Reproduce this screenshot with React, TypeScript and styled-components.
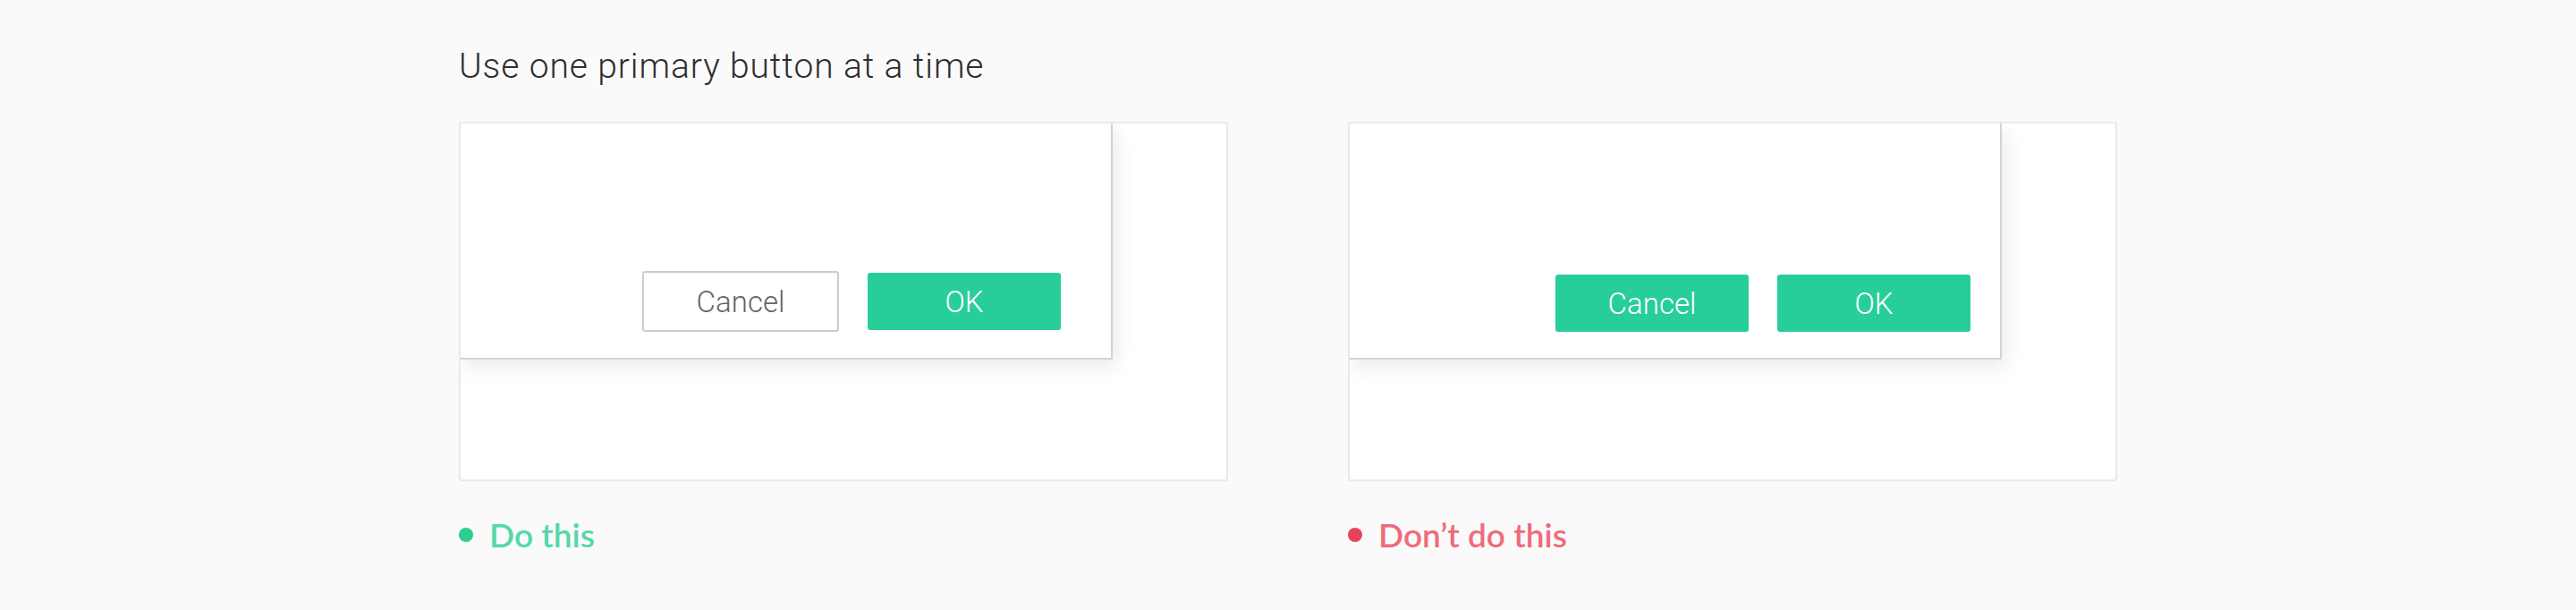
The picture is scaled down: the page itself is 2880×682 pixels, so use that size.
import { createGlobalStyle, styled } from "styled-components";

const GlobalStyle = createGlobalStyle`
  html, body {
    margin: 0;
    padding: 0;
    background: #fafafa;
  }
  body {
    font-family: Lato, "Open Sans", sans-serif;
  }
`;

const Page = styled.main`
  width: 1854px;
  height: 682px;
  margin: 0 auto;
  padding-top: 52px;
  box-sizing: border-box;
`;

const Title = styled.h2`
  margin: 0 0 40px;
  font-family: Roboto, "Liberation Sans", sans-serif;
  font-weight: 300;
  font-size: 39px;
  line-height: 44px;
  letter-spacing: 0.9px;
  color: #2e2e2e;
`;

const Columns = styled.div`
  display: grid;
  grid-template-columns: 860px 860px;
  column-gap: 134px;
`;

const Frame = styled.div`
  height: 402px;
  box-sizing: border-box;
  border: 2px solid #e9e9e9;
  border-radius: 3px;
  background: #ffffff;
  overflow: hidden;
`;

const Dialog = styled.div<{ $padRight: number }>`
  width: 729px;
  height: 264px;
  box-sizing: border-box;
  background: #ffffff;
  border-right: 2px solid #d2d2d2;
  border-bottom: 2px solid #d2d2d2;
  border-bottom-right-radius: 2px;
  box-shadow: 4px 8px 22px rgba(0, 0, 0, 0.09);
  display: flex;
  align-items: flex-end;
  justify-content: flex-end;
  padding: 0 ${(p) => p.$padRight}px 29px 0;
`;

const ButtonRow = styled.div`
  display: flex;
  align-items: center;
  gap: 32px;
`;

const Button = styled.button<{ $primary?: boolean }>`
  display: flex;
  align-items: center;
  justify-content: center;
  box-sizing: border-box;
  padding: 0;
  font-family: Roboto, "Liberation Sans", sans-serif;
  font-weight: 300;
  font-size: 33px;
  border-radius: 3px;
  cursor: pointer;
  ${(p) =>
    p.$primary
      ? `
    width: 216px;
    height: 64px;
    border: none;
    background: #27ce99;
    color: #ffffff;
  `
      : `
    width: 220px;
    height: 68px;
    border: 2px solid #cccccc;
    background: #ffffff;
    color: #666666;
  `}
`;

const Verdict = styled.div<{ $tone: "good" | "bad" }>`
  display: flex;
  align-items: center;
  gap: 18px;
  margin-top: 38px;
  font-family: Lato, "Open Sans", sans-serif;
  font-weight: 600;
  font-size: 37px;
  line-height: 43px;
  color: ${(p) => (p.$tone === "good" ? "#55d8a8" : "#f06b7b")};

  &::before {
    content: "";
    width: 16px;
    height: 16px;
    border-radius: 50%;
    flex: none;
    background: ${(p) => (p.$tone === "good" ? "#2ecc8f" : "#e8425a")};
  }
`;

export default function App() {
  return (
    <>
      <GlobalStyle />
      <Page>
        <Title>Use one primary button at a time</Title>
        <Columns>
          <Frame>
            <Dialog $padRight={56}>
              <ButtonRow>
                <Button>Cancel</Button>
                <Button $primary>OK</Button>
              </ButtonRow>
            </Dialog>
          </Frame>
          <Frame>
            <Dialog $padRight={33}>
              <ButtonRow>
                <Button $primary>Cancel</Button>
                <Button $primary>OK</Button>
              </ButtonRow>
            </Dialog>
          </Frame>
          <Verdict $tone="good">Do this</Verdict>
          <Verdict $tone="bad">Don’t do this</Verdict>
        </Columns>
      </Page>
    </>
  );
}
